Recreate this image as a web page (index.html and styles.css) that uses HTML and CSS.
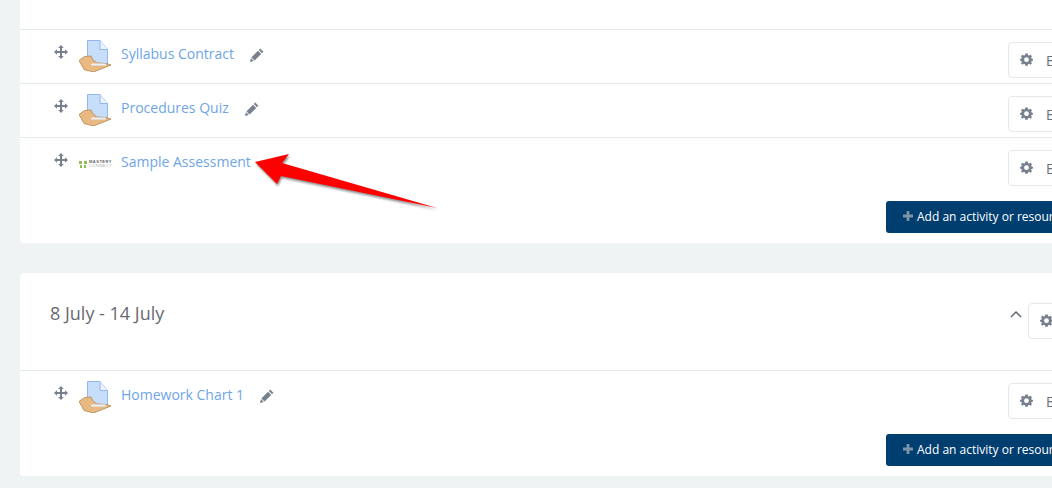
FILE: index.html
```html
<!DOCTYPE html>
<html lang="en">
<head>
    <meta charset="UTF-8">
    <title>Course sections</title>
    <link rel="stylesheet" href="styles.css">
</head>
<body>
    <svg class="defs" width="0" height="0">
        <symbol id="move" viewBox="0 0 14 14">
            <path d="M7 0 9.8 3H8V6H11V4.2L14 7 11 9.8V8H8V11H9.8L7 14 4.2 11H6V8H3V9.8L0 7 3 4.2V6H6V3H4.2Z"/>
        </symbol>
        <symbol id="pencil" viewBox="0 0 14 14">
            <path d="M10.2.6 13.4 3.8 12 5.2 8.8 2ZM8 2.8 11.2 6 4.6 12.6 1.4 9.4ZM.9 10.2 3.8 13.1 0 14Z"/>
        </symbol>
        <symbol id="gear" viewBox="0 0 14 14">
            <path fill-rule="evenodd" d="M5.7.5H8.3L8.7 2.3 9.9 2.8 11.5 1.8 12.9 3.4 12 4.9 12.4 6 14 6.4V8.1L12.4 8.5 12 9.6 12.9 11.1 11.4 12.6 9.9 11.7 8.7 12.2 8.3 13.8H5.7L5.3 12.2 4.1 11.7 2.6 12.6 1.1 11.1 2 9.6 1.6 8.5 0 8.1V6.4L1.6 6 2 4.9 1.1 3.4 2.5 1.8 4.1 2.8 5.3 2.3ZM7 4.6A2.6 2.6 0 1 0 7 9.8 2.6 2.6 0 1 0 7 4.6Z"/>
        </symbol>
        <symbol id="handout" viewBox="0 0 32 32">
            <path d="M8.5.5H21L28.5 9.5V24H8.5Z" fill="#c6def9" stroke="#94b6ea"/>
            <path d="M21 .5V9.5H28.5" fill="#eaf3fd" stroke="#94b6ea"/>
            <path d="M0 20.5 5.5 16.5 12 16 14 20 18 23 27 23.5 32 25 22 29 14.5 32 5 29.5Z" fill="#e8b983" stroke="#b5854f" stroke-width=".8"/>
            <path d="M13 24.5H26" stroke="#eaf3fd" stroke-width="2" stroke-linecap="round"/>
        </symbol>
    </svg>

    <section class="card first">
        <div class="row">
            <div class="item">
                <svg class="move"><use href="#move"/></svg>
                <svg class="handout"><use href="#handout"/></svg>
                <a class="link" href="#">Syllabus Contract</a>
                <svg class="pencil"><use href="#pencil"/></svg>
            </div>
            <button class="edit"><svg class="gear"><use href="#gear"/></svg>Edit</button>
        </div>
        <div class="row">
            <div class="item">
                <svg class="move"><use href="#move"/></svg>
                <svg class="handout"><use href="#handout"/></svg>
                <a class="link" href="#">Procedures Quiz</a>
                <svg class="pencil"><use href="#pencil"/></svg>
            </div>
            <button class="edit"><svg class="gear"><use href="#gear"/></svg>Edit</button>
        </div>
        <div class="row">
            <div class="item">
                <svg class="move"><use href="#move"/></svg>
                <div class="logo">
                    <svg class="logo-mark" viewBox="0 0 8 7">
                        <path d="M0 0H3V3H0ZM5 0H8V3H5ZM1 4H3V7H1ZM5 4H7V7H5Z"/>
                    </svg>
                    <div class="logo-text">MASTERY<span>CONNECT</span></div>
                </div>
                <a class="link" href="#">Sample Assessment</a>
            </div>
            <button class="edit"><svg class="gear"><use href="#gear"/></svg>Edit</button>
        </div>
        <div class="add-row">
            <button class="add"><svg class="plus" viewBox="0 0 10 10"><path d="M3.6 0H6.4V3.6H10V6.4H6.4V10H3.6V6.4H0V3.6H3.6Z"/></svg>Add an activity or resource</button>
        </div>
    </section>

    <section class="card">
        <div class="section-head">
            <h3>8 July - 14 July</h3>
            <div class="section-tools">
                <svg class="chevron" viewBox="0 0 12 8"><path d="M1 7 6 2 11 7"/></svg>
                <button class="edit"><svg class="gear"><use href="#gear"/></svg>Edit</button>
            </div>
        </div>
        <div class="row">
            <div class="item">
                <svg class="move"><use href="#move"/></svg>
                <svg class="handout"><use href="#handout"/></svg>
                <a class="link" href="#">Homework Chart 1</a>
                <svg class="pencil"><use href="#pencil"/></svg>
            </div>
            <button class="edit"><svg class="gear"><use href="#gear"/></svg>Edit</button>
        </div>
        <div class="add-row">
            <button class="add"><svg class="plus" viewBox="0 0 10 10"><path d="M3.6 0H6.4V3.6H10V6.4H6.4V10H3.6V6.4H0V3.6H3.6Z"/></svg>Add an activity or resource</button>
        </div>
    </section>

    <!-- annotation drawn on top of the screenshot -->
    <svg class="arrow" viewBox="0 0 200 70">
        <path d="M3 15 37 7 30 16 185 61 29 29 25 37Z"/>
    </svg>
</body>
</html>
```

FILE: styles.css
```css
html, body {
    height: 488px;
    overflow: hidden;
}
body {
    font-family: "Open Sans", sans-serif;
    font-size: 14px;
    background-color: #eff3f4;
    color: #6a737b;
    margin: 0;
    width: 1052px;
    position: relative;
}
.defs {
    position: absolute;
}
.card {
    width: 1066px;
    margin-left: 20px;
    padding-right: 20px;
    background: #fff;
    border-radius: 4px;
    margin-bottom: 30px;
    padding-bottom: 10px;
}
.first {
    padding-top: 29px;
    border-radius: 0 0 4px 4px;
}
.row {
    display: flex;
    justify-content: space-between;
    align-items: flex-start;
    border-top: 1px solid #e5e8ea;
    padding: 12px 0 5px;
}
.item {
    display: flex;
    align-items: flex-start;
    padding-left: 34px;
}
.move {
    width: 14px;
    height: 14px;
    margin-top: 3px;
    fill: #77818d;
}
.handout {
    width: 32px;
    height: 32px;
    margin: -2px 10px 0 11px;
}
.logo {
    width: 33px;
    height: 32px;
    margin: -2px 9px 0 11px;
    display: flex;
    align-items: center;
    gap: 2px;
}
.logo-mark {
    width: 8px;
    height: 7px;
    flex: none;
    fill: #8cc152;
}
.logo-text {
    font-family: "Liberation Sans", sans-serif;
    font-size: 4px;
    line-height: 4px;
    letter-spacing: 0.5px;
    font-weight: bold;
    color: #666;
    white-space: nowrap;
}
.logo-text span {
    display: block;
    font-weight: normal;
    color: #aaa;
}
.link {
    color: #6fa5e8;
    text-decoration: none;
    line-height: 24px;
}
.pencil {
    width: 14px;
    height: 14px;
    margin: 6px 0 0 16px;
    fill: #77818d;
}
.edit {
    display: flex;
    align-items: center;
    width: 78px;
    height: 36px;
    padding: 0 0 0 11px;
    background: #fff;
    border: 1px solid #e5e8ea;
    border-radius: 4px;
    font-family: inherit;
    font-size: 14px;
    color: #6a737b;
}
.gear {
    width: 13px;
    height: 13px;
    margin: 0 13px 2px 0;
    fill: #77818d;
}
.add-row {
    display: flex;
    justify-content: flex-end;
    margin-top: 10px;
}
.add {
    display: flex;
    align-items: center;
    width: 200px;
    height: 32px;
    padding: 0 0 2px 17px;
    background-color: #003e70;
    color: #fff;
    border: none;
    border-radius: 3px;
    font-family: inherit;
    font-size: 12px;
    white-space: nowrap;
}
.plus {
    width: 10px;
    height: 10px;
    margin-right: 4px;
    fill: #7d93a8;
}
.section-head {
    display: flex;
    justify-content: space-between;
    align-items: flex-start;
    height: 97px;
    margin-right: -20px;
}
.section-head h3 {
    margin: 28px 0 0 30px;
    font-size: 18px;
    font-weight: 400;
    line-height: 24px;
    color: #6a6a70;
}
.section-tools {
    display: flex;
    align-items: flex-start;
    gap: 6px;
    padding-top: 30px;
}
.chevron {
    width: 12px;
    height: 8px;
    margin-top: 7px;
    fill: none;
    stroke: #56606a;
    stroke-width: 1.4;
}
.arrow {
    position: absolute;
    left: 252px;
    top: 147px;
    width: 200px;
    height: 70px;
    fill: #f00;
    filter: drop-shadow(1px 2px 1px rgba(0, 0, 0, 0.45));
}
```
